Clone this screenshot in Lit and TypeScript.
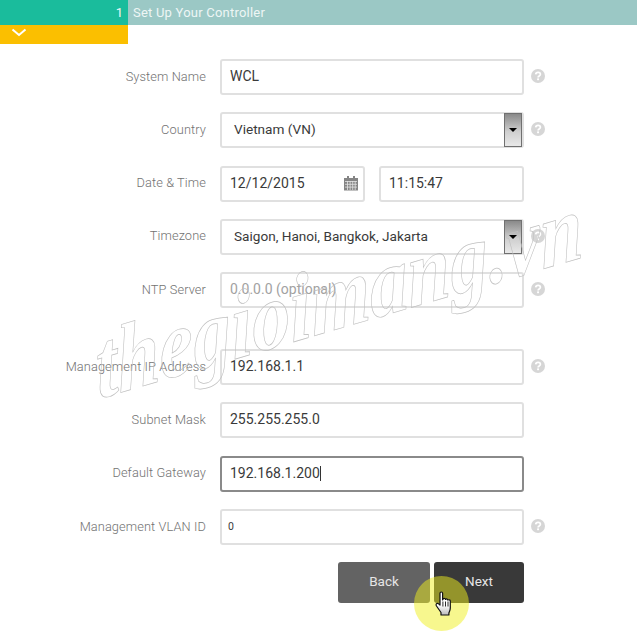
import { LitElement, html, css, svg } from "lit";
import { customElement } from "lit/decorators.js";

const help = html`<svg class="help" viewBox="0 0 14 14" aria-hidden="true"><circle cx="7" cy="7" r="7" fill="#d6d6d6"/><path d="M4.700 5.400C4.800 4 5.800 3.300 7.100 3.300c1.400 0 2.300.8 2.300 1.900 0 1.900-2.300 1.700-2.300 3.400" fill="none" stroke="#fff" stroke-width="1.700"/><rect x="6.100" y="9.400" width="1.900" height="1.800" fill="#fff"/></svg>`;

const calendar = html`<svg class="cal" viewBox="0 0 16 16" aria-hidden="true"><path d="M1 3h14v12.500H1z" fill="#858585"/><rect x="4" y="1" width="2" height="3.400" fill="#858585"/><rect x="10" y="1" width="2" height="3.400" fill="#858585"/>${svg`<path d="M2 6.500h12M2 9.300h12M2 12.100h12M4.500 6v9M7.100 6v9M9.700 6v9M12.200 6v9" stroke="#e4e4e4" stroke-width=".8" fill="none"/>`}</svg>`;

@customElement("app-root")
export class AppRoot extends LitElement {
  static styles = css`
    :host { display: block; position: relative; width: 637px; height: 640px; overflow: hidden; background: #fff; font-family: Roboto, "Open Sans", sans-serif; }
    .bar { display: flex; height: 25px; background: #9bc8c5; color: #eef6f5; font-size: 13px; line-height: 26px; }
    .step { width: 128px; background: #1abc9c; box-sizing: border-box; padding-right: 5px; text-align: right; font-size: 13px; }
    .title { padding-left: 5px; letter-spacing: .22px; }
    .tab { width: 128px; height: 19px; background: #fbbf00; display: flex; padding-left: 11px; box-sizing: border-box; }
    .tab svg { width: 16px; height: 10px; margin-top: 3px; }
    form { display: flex; flex-direction: column; margin-top: 15px; }
    .group { display: flex; flex-direction: column; gap: 17.300px; }
    .group + .group { margin-top: 41px; }
    .row { display: grid; grid-template-columns: 206px 304px 14px; column-gap: 14px; height: 36px; align-items: center; }
    .row > .help { margin-left: -7px; margin-bottom: 2px; }
    label { text-align: right; font-size: 12.800px; font-weight: 300; color: #727272; letter-spacing: .1px; white-space: nowrap; padding-bottom: 2px; }
    .field { box-sizing: border-box; height: 36px; border: 2px solid #e0e0e0; border-radius: 3px; background: #fff; padding: 0 0 2px 8px; font-size: 14px; color: #3a3a3a; display: flex; align-items: center; justify-content: space-between; }
    .focus { border-color: #8a8a8a; }
    .ph { color: #a2a2a2; }
    .small { font-size: 10.500px; padding-left: 6px; }
    .pair { display: flex; justify-content: space-between; }
    .date { width: 145px; padding-right: 4px; }
    .time { width: 145px; }
    .sel { padding-left: 12px; padding-right: 0; padding-bottom: 0; font-size: 13.600px; }
    .sel > span:first-child { padding-bottom: 2px; }
    .drop { width: 18px; height: 34px; box-sizing: border-box; border: 1px solid #707070; background: linear-gradient(#8a8a8a, #cfcfcf 55%, #e8e8e8); display: flex; align-items: center; justify-content: center; }
    .drop i { border: 4px solid transparent; border-top: 4px solid #000; border-bottom: 0; }
    .cal { width: 16px; height: 16px; }
    .help { width: 14px; height: 14px; display: block; }
    .caret { display: inline-block; width: 1px; height: 15px; background: #333; vertical-align: -3px; }
    .actions { display: flex; justify-content: flex-end; gap: 4px; width: 524px; margin-top: 17px; }
    button { height: 41px; border: 0; border-radius: 3px; color: #e6e6e6; font: 400 13.500px Roboto, sans-serif; padding: 0 0 4px; }
    .back { width: 92px; background: #636363; }
    .next { width: 90px; background: #393939; }
    .spot { position: absolute; left: 414px; top: 576px; width: 55px; height: 55px; border-radius: 50%; background: rgba(240, 240, 30, .5); }
    .hand { position: absolute; left: 435px; top: 591px; width: 18px; height: 26px; }
    .mark { position: absolute; left: 98px; top: 320px; font: italic 700 94px "Liberation Serif", serif; line-height: 1; color: transparent; -webkit-text-stroke: .7px #c0c0c0; transform: rotate(-16.300deg) skewX(-12deg) scaleX(.84); transform-origin: 0 77px; white-space: nowrap; pointer-events: none; }
  `;

  private row(name: string, body: unknown, withHelp = true) {
    return html`<div class="row"><label>${name}</label>${body}${withHelp ? help : html`<span></span>`}</div>`;
  }

  render() {
    return html`
      <div class="bar"><div class="step">1</div><div class="title">Set Up Your Controller</div></div>
      <div class="tab"><svg viewBox="0 0 16 10" aria-hidden="true"><path d="M1.500 1.500l6.500 5.500 6.500-5.500" fill="none" stroke="#fff" stroke-width="2"/></svg></div>
      <form>
        <div class="group">
          ${this.row("System Name", html`<div class="field">WCL</div>`)}
          ${this.row("Country", html`<div class="field sel"><span>Vietnam (VN)</span><span class="drop"><i></i></span></div>`)}
          ${this.row("Date & Time", html`<div class="pair"><div class="field date">12/12/2015${calendar}</div><div class="field time">11:15:47</div></div>`, false)}
          ${this.row("Timezone", html`<div class="field sel"><span>Saigon, Hanoi, Bangkok, Jakarta</span><span class="drop"><i></i></span></div>`)}
          ${this.row("NTP Server", html`<div class="field ph">0.0.0.0 (optional)</div>`)}
        </div>
        <div class="group">
          ${this.row("Management IP Address", html`<div class="field">192.168.1.1</div>`)}
          ${this.row("Subnet Mask", html`<div class="field">255.255.255.0</div>`, false)}
          ${this.row("Default Gateway", html`<div class="field focus"><span>192.168.1.200<span class="caret"></span></span></div>`, false)}
          ${this.row("Management VLAN ID", html`<div class="field small">0</div>`)}
        </div>
        <div class="actions"><button type="button" class="back">Back</button><button type="button" class="next">Next</button></div>
      </form>
      <div class="mark">thegioimang.vn</div>
      <div class="spot"></div>
      <svg class="hand" viewBox="0 0 18 26" aria-hidden="true"><defs><linearGradient id="hg" x1="0" y1="0" x2="0" y2="1"><stop offset=".55" stop-color="#fff"/><stop offset="1" stop-color="#bbb"/></linearGradient></defs><path d="M5 2.200c0-1.600 2.600-1.600 2.600 0V9l.4-1c1-1 2.400-.6 2.500.5.8-.9 2.300-.6 2.400.6.9-.7 2.300-.3 2.400.9V17c0 2-.8 3.400-1.400 5v2H6v-2.500L1.500 15C.4 13 2 11.500 3.600 12.800L5 14z" fill="url(#hg)" stroke="#111" stroke-width="1.200" stroke-linejoin="round"/><path d="M7.900 10.500v5M10.500 10.500v5M13 10.500v5" stroke="#111" stroke-width=".9"/></svg>
    `;
  }
}
